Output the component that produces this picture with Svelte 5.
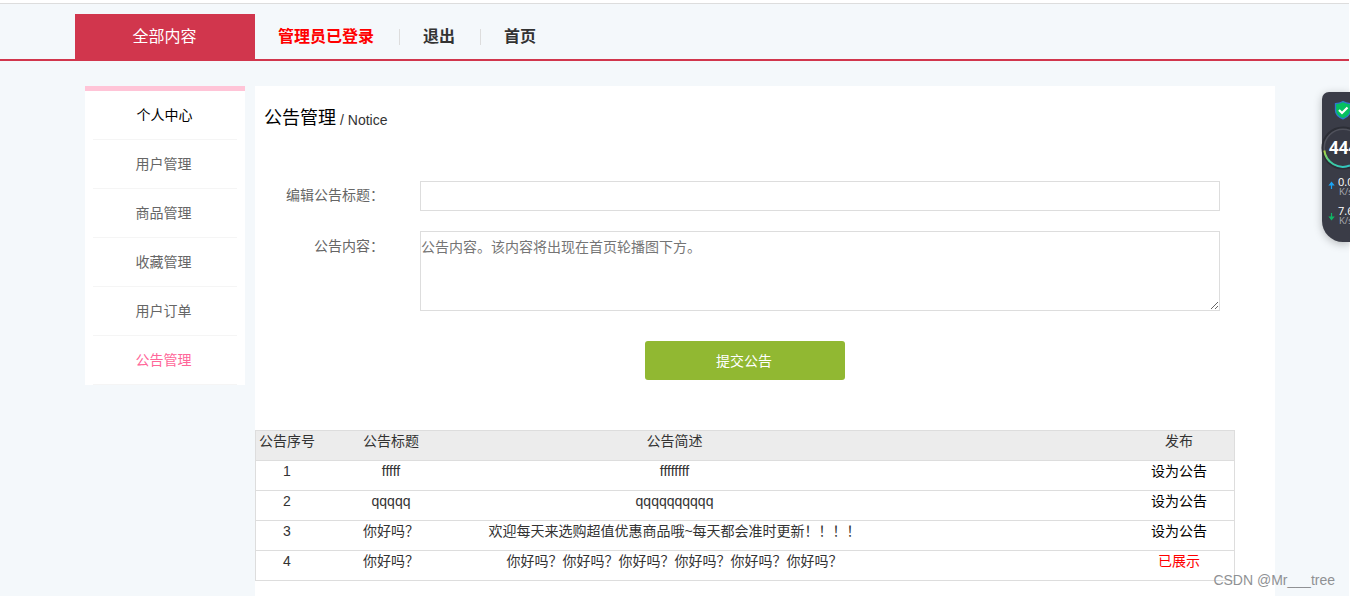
<script lang="ts">
  type Notice = { id: number; title: string; summary: string; shown: boolean };

  const menu = ["个人中心", "用户管理", "商品管理", "收藏管理", "用户订单", "公告管理"];
  const active = "公告管理";

  const notices: Notice[] = [
    { id: 1, title: "fffff", summary: "ffffffff", shown: false },
    { id: 2, title: "qqqqq", summary: "qqqqqqqqqq", shown: false },
    { id: 3, title: "你好吗？", summary: "欢迎每天来选购超值优惠商品哦~每天都会准时更新！！！！", shown: false },
    { id: 4, title: "你好吗？", summary: "你好吗？你好吗？你好吗？你好吗？你好吗？你好吗？", shown: true },
  ];

  let title = $state("");
  let content = $state("");
</script>

<div class="page">
  <header class="topbar">
    <div class="all">全部内容</div>
    <nav>
      <span class="item logged">管理员已登录</span>
      <span class="item">退出</span>
      <span class="item">首页</span>
    </nav>
  </header>

  <div class="content">
    <aside>
      <ul>
        {#each menu as label, i}
          <li class:first={i === 0} class:active={label === active}>{label}</li>
        {/each}
      </ul>
    </aside>

    <main>
      <h1>公告管理<small>/ Notice</small></h1>

      <form onsubmit={(e) => e.preventDefault()}>
        <div class="field">
          <label for="title">编辑公告标题：</label>
          <input id="title" type="text" bind:value={title} />
        </div>
        <div class="field">
          <label for="content">公告内容：</label>
          <textarea
            id="content"
            placeholder="公告内容。该内容将出现在首页轮播图下方。"
            bind:value={content}
          ></textarea>
        </div>
        <button type="submit">提交公告</button>
      </form>

      <div class="table">
        <div class="row head">
          <span>公告序号</span>
          <span>公告标题</span>
          <span>公告简述</span>
          <span></span>
          <span>发布</span>
        </div>
        {#each notices as n (n.id)}
          <div class="row">
            <span>{n.id}</span>
            <span>{n.title}</span>
            <span>{n.summary}</span>
            <span></span>
            <span class={n.shown ? "shown" : "publish"}>{n.shown ? "已展示" : "设为公告"}</span>
          </div>
        {/each}
      </div>
    </main>
  </div>

  <!-- floating speed monitor, docked half off the right edge -->
  <div class="widget">
    <svg width="28" height="150" viewBox="0 0 28 150">
      <defs>
        <linearGradient id="arc" x1="0" y1="0" x2="1" y2="1">
          <stop offset="0" stop-color="#b4d43c" />
          <stop offset="0.45" stop-color="#3fcf9c" />
          <stop offset="1" stop-color="#2fc4c4" />
        </linearGradient>
      </defs>
      <path
        d="M21 9.5c-2.5 1.5-5 2-7.5 2.2v6.500c0 4.500 3.500 7 7.500 8.700 4-1.700 7.500-4.200 7.500-8.700v-6.500c-2.500-.2-5-.7-7.500-2.200z"
        fill="#06c060"
        stroke="#2f78d0"
        stroke-width="1.3"
      />
      <path d="M17 18l3 3 5.5-5.5" fill="none" stroke="#fff" stroke-width="2.2" />
      <circle cx="21" cy="56" r="20.5" fill="#33353e" stroke="#2c2e36" stroke-width="2" />
      <circle cx="21" cy="56" r="18.8" fill="#373944" stroke="#50525c" stroke-width="1.5" />
      <path d="M2.3 58.5A18.8 18.8 0 0 0 28 73.4" fill="none" stroke="url(#arc)" stroke-width="2" />
      <path d="M9.5 97v-5M7.5 93l2-2.500 2 2.500z" fill="#1ba4f5" stroke="#1ba4f5" stroke-width="1.2" />
      <path d="M9.5 121v5M7.5 125l2 2.500 2-2.500z" fill="#0fb765" stroke="#0fb765" stroke-width="1.2" />
      <text class="score" x="7" y="62">444</text>
      <text class="speed" x="16" y="94">0.0</text>
      <text class="unit" x="17" y="103">K/s</text>
      <text class="speed" x="16" y="123">7.6</text>
      <text class="unit" x="17" y="132">K/s</text>
    </svg>
  </div>

  <div class="watermark">CSDN @Mr___tree</div>
</div>

<style>
  :global(body) {
    background: #fff;
    overflow: hidden;
  }

  .page {
    position: relative;
    box-sizing: border-box;
    width: 1350px;
    height: 596px;
    padding-top: 3px;
    overflow: hidden;
    font-family: "Liberation Sans", "Noto Sans CJK SC", sans-serif;
    font-size: 14px;
    color: #333;
  }

  .topbar {
    display: flex;
    align-items: flex-end;
    box-sizing: border-box;
    width: 1349px;
    height: 58px;
    padding-left: 75px;
    background: #f4f8fb;
    border-top: 1px solid #ddd;
    border-bottom: 2px solid #d1364d;
    font-size: 16px;
    line-height: 45px;
  }

  .all {
    box-sizing: border-box;
    width: 180px;
    padding-right: 1px;
    background: #d1364d;
    color: #fff;
    text-align: center;
  }

  nav {
    display: flex;
    align-items: center;
    height: 45px;
    font-weight: bold;
  }

  .item {
    padding: 0 25px 0 23px;
    line-height: 16px;
  }

  .item + .item {
    border-left: 1px solid #ddd;
  }

  .logged {
    color: #f00;
  }

  .content {
    display: flex;
    align-items: flex-start;
    gap: 10px;
    box-sizing: border-box;
    width: 1349px;
    height: 535px;
    padding: 25px 0 0 85px;
    background: #f4f8fb;
  }

  aside {
    box-sizing: border-box;
    width: 160px;
    height: 299px;
    border-top: 5px solid #ffc4d7;
    background: #fff;
  }

  ul {
    margin: 0;
    padding: 0 8px;
    list-style: none;
  }

  li {
    height: 48px;
    padding-right: 3px;
    border-bottom: 1px solid #f5f5f5;
    line-height: 48px;
    text-align: center;
    color: #666;
  }

  li.first {
    padding-right: 1px;
    color: #000;
  }

  li.active {
    color: #ff6699;
  }

  main {
    width: 1020px;
    height: 510px;
    background: #fff;
  }

  h1 {
    display: flex;
    align-items: center;
    height: 28px;
    margin: 0;
    padding: 18px 0 0 9px;
    font-size: 18px;
    font-weight: normal;
    line-height: 28px;
    color: #000;
  }

  h1 small {
    margin-left: 4px;
    padding-top: 4px;
    font-size: 14px;
    line-height: 24px;
    color: #333;
  }

  form {
    display: flex;
    flex-direction: column;
    gap: 20px;
    padding-top: 49px;
  }

  .field {
    display: flex;
  }

  label {
    width: 129px;
    margin-right: 36px;
    line-height: 28px;
    text-align: right;
    color: #666;
  }

  .field + .field label {
    line-height: 30px;
  }

  input,
  textarea {
    box-sizing: border-box;
    width: 800px;
    height: 30px;
    margin: 0;
    padding: 0;
    border: 1px solid #ddd;
    font: inherit;
    line-height: 30px;
    outline: none;
  }

  textarea {
    height: 80px;
  }

  textarea::placeholder {
    color: #757575;
  }

  button {
    width: 200px;
    height: 39px;
    margin: 10px 0 0 390px;
    padding: 0 2px 2px 0;
    border: 0;
    border-radius: 3px;
    background: #91b832;
    color: #fff;
    font: inherit;
  }

  .table {
    box-sizing: border-box;
    width: 980px;
    margin-top: 50px;
    border: 1px solid #ddd;
    border-bottom: 0;
  }

  .row {
    display: grid;
    grid-template-columns: 62px 146px 421px 239px 110px;
    height: 29px;
    border-bottom: 1px solid #ddd;
    line-height: 20px;
    text-align: center;
    white-space: nowrap;
  }

  .head {
    background: #ececec;
  }

  .publish {
    color: #000;
  }

  .shown {
    color: #f00;
  }

  .widget {
    position: absolute;
    top: 92px;
    right: 0;
    width: 28px;
    height: 150px;
    border-radius: 7px 0 0 21px;
    background: #3a3c47;
    box-shadow: 0 2px 8px rgba(0, 0, 0, 0.25);
  }

  svg {
    display: block;
    overflow: visible;
  }

  text {
    fill: #fff;
    font-family: "Open Sans", sans-serif;
  }

  .score {
    font-size: 17px;
    font-weight: bold;
  }

  .speed {
    font-size: 11px;
  }

  .unit {
    fill: #a9abb3;
    font-size: 9.5px;
  }

  .watermark {
    position: absolute;
    right: 15px;
    bottom: 6px;
    font-size: 14px;
    line-height: 20px;
    color: #8f9194;
  }
</style>
